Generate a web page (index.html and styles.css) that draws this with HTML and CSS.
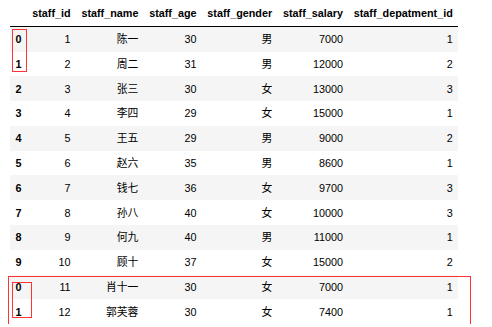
FILE: index.html
```html
<!DOCTYPE html>
<html>
<head>
<meta charset="utf-8">
<link rel="stylesheet" href="styles.css">
</head>
<body>
<div class="wrap">
<table class="df">
<thead>
<tr><th></th><th>staff_id</th><th>staff_name</th><th>staff_age</th><th>staff_gender</th><th>staff_salary</th><th>staff_depatment_id</th></tr>
</thead>
<tbody>
<tr><th>0</th><td>1</td><td>陈一</td><td>30</td><td>男</td><td>7000</td><td>1</td></tr>
<tr><th>1</th><td>2</td><td>周二</td><td>31</td><td>男</td><td>12000</td><td>2</td></tr>
<tr><th>2</th><td>3</td><td>张三</td><td>30</td><td>女</td><td>13000</td><td>3</td></tr>
<tr><th>3</th><td>4</td><td>李四</td><td>29</td><td>女</td><td>15000</td><td>1</td></tr>
<tr><th>4</th><td>5</td><td>王五</td><td>29</td><td>男</td><td>9000</td><td>2</td></tr>
<tr><th>5</th><td>6</td><td>赵六</td><td>35</td><td>男</td><td>8600</td><td>1</td></tr>
<tr><th>6</th><td>7</td><td>钱七</td><td>36</td><td>女</td><td>9700</td><td>3</td></tr>
<tr><th>7</th><td>8</td><td>孙八</td><td>40</td><td>女</td><td>10000</td><td>3</td></tr>
<tr><th>8</th><td>9</td><td>何九</td><td>40</td><td>男</td><td>11000</td><td>1</td></tr>
<tr><th>9</th><td>10</td><td>顾十</td><td>37</td><td>女</td><td>15000</td><td>2</td></tr>
<tr><th>0</th><td>11</td><td>肖十一</td><td>30</td><td>女</td><td>7000</td><td>1</td></tr>
<tr><th>1</th><td>12</td><td>郭芙蓉</td><td>30</td><td>女</td><td>7400</td><td>1</td></tr>
</tbody>
</table>
<div class="mark mark-a"></div>
<div class="mark mark-b"></div>
<div class="mark mark-c"></div>
</div>
</body>
</html>
```

FILE: styles.css
```css
html, body {
  margin: 0;
  padding: 0;
  background: #fff;
}
.wrap {
  position: relative;
  padding: 0 10px;
}
.df {
  border-collapse: collapse;
  border-spacing: 0;
  font-family: "Liberation Sans", Arial, "Noto Sans CJK SC", sans-serif;
  font-size: 10.8px;
  color: #000;
}
.df th, .df td {
  text-align: right;
  padding: 5.3px 5.4px;
  line-height: 14.2px;
  white-space: nowrap;
  vertical-align: middle;
}
.df thead th {
  font-weight: bold;
  border-bottom: 1px solid #000;
  padding-top: 6px;
  padding-bottom: 5.5px;
}
.df tbody th {
  font-weight: bold;
  text-align: left;
}
.df tbody tr:nth-child(odd) {
  background: #f5f5f5;
}
.mark {
  position: absolute;
  border: 1px solid #f33;
  box-sizing: border-box;
}
.mark-a { left: 12px; top: 29px; width: 15px; height: 43px; }
.mark-b { left: 8px; top: 276px; width: 463px; height: 49px; }
.mark-c { left: 12px; top: 282px; width: 20px; height: 36px; }
```
